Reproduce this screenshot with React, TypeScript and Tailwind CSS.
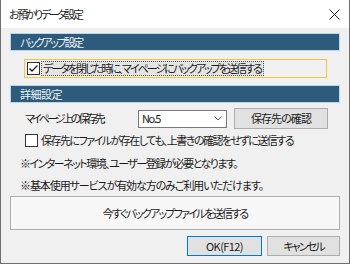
import React from "react";

const font = {
  fontFamily: '"Noto Sans CJK JP", "Noto Sans", sans-serif',
  fontFeatureSettings: '"palt"',
};

function CheckBox({ checked }: { checked?: boolean }) {
  return (
    <svg width="13" height="13" viewBox="0 0 13 13" className="shrink-0">
      <rect x="0.5" y="0.5" width="12" height="12" fill="#ffffff" stroke="#333333" />
      {checked && (
        <path d="M2.5 6.5 L5 9 L10.5 3.5" fill="none" stroke="#222222" strokeWidth="1.4" />
      )}
    </svg>
  );
}

function Header({ label, track }: { label: string; track: string }) {
  return (
    <div className="h-[18px] bg-[#2d5b7b] border border-[#bdd6e9] flex items-center pl-[9px]">
      <span className={"text-[11px] leading-none text-[#eef3f7] whitespace-nowrap " + track}>{label}</span>
    </div>
  );
}

export default function App() {
  return (
    <div
      className="w-[350px] h-[264px] overflow-hidden bg-[#f0f0f0] border-x border-b border-[#6e6e6e] flex flex-col text-[#1a1a1a]"
      style={font}
    >
      <div className="h-[28px] bg-white flex items-center justify-between pl-[8px] pr-[9px] shrink-0">
        <span className="text-[11px] leading-none text-[#222] whitespace-nowrap tracking-[-2.4px]">お預かりデータ設定</span>
        <svg width="11" height="11" viewBox="0 0 11 11">
          <path d="M0.5 0.5 L10.5 10.5 M10.5 0.5 L0.5 10.5" stroke="#222" strokeWidth="1" />
        </svg>
      </div>
      <div className="flex flex-col px-[9px] pt-[5px]">
        <Header label="バックアップ設定" track="tracking-[-2.25px]" />
        <div className="mt-[8px] ml-[14px] w-[303px] h-[19px] border border-[#f5c53c] flex items-center pl-[2px]">
          <CheckBox checked />
          <span className="ml-[1px] h-[15px] flex items-center pl-[1px] pr-[2px] border border-dotted border-[#555] bg-[#e4e4e4] text-[11px] leading-none whitespace-nowrap tracking-[-1.98px]">
            データを閉じた時に、マイページにバックアップを送信する
          </span>
        </div>
        <div className="mt-[7px]">
          <Header label="詳細設定" track="tracking-[-0.5px]" />
        </div>
        <div className="mt-[5px] h-[21px] flex items-center">
          <span className="ml-[15px] w-[113px] text-[11px] leading-none whitespace-nowrap tracking-[-2.9px]">マイページ上の保存先:</span>
          <div className="w-[89px] h-[18px] bg-white border border-[#7a7a7a] flex items-center justify-between pl-[3px] pr-[4px]">
            <span className="text-[11px] leading-none tracking-[-1.4px]">No.5</span>
            <svg width="8" height="5" viewBox="0 0 8 5">
              <path d="M0.5 0.5 L4 4 L7.5 0.5" fill="none" stroke="#555" strokeWidth="1" />
            </svg>
          </div>
          <button className="ml-[7px] w-[94px] h-[21px] bg-[#e1e1e1] border border-[#adadad] text-[11px] leading-none flex items-center justify-center whitespace-nowrap tracking-[-0.93px]">
            保存先の確認
          </button>
        </div>
        <div className="mt-[4px] h-[14px] flex items-center pl-[15px]">
          <CheckBox />
          <span className="ml-[3px] text-[11px] leading-none whitespace-nowrap tracking-[-1.52px]">
            保存先にファイルが存在しても、上書きの確認をせずに送信する
          </span>
        </div>
        <div className="mt-[8px] h-[16px] flex items-center pl-[10px] text-[11px] leading-none whitespace-nowrap tracking-[-1.55px]">
          ※インターネット環境、ユーザー登録が必要となります。
        </div>
        <div className="mt-[6px] h-[16px] flex items-center pl-[10px] text-[11px] leading-none whitespace-nowrap tracking-[-1.08px]">
          ※基本使用サービスが有効な方のみご利用いただけます。
        </div>
        <button className="mt-[3px] h-[34px] w-full bg-[#f7f7f7] border border-[#adadad] text-[11px] leading-none flex items-center justify-center whitespace-nowrap tracking-[-1.8px]">
          今すぐバックアップファイルを送信する
        </button>
        <div className="mt-[6px] flex justify-end gap-[5px]">
          <button className="w-[75px] h-[20px] bg-[#e1e1e1] border border-[#0078d7] text-[11px] leading-none flex items-center justify-center whitespace-nowrap tracking-[-0.57px]">
            OK(F12)
          </button>
          <button className="w-[73px] h-[20px] bg-[#e1e1e1] border border-[#adadad] text-[11px] leading-none flex items-center justify-center whitespace-nowrap tracking-[-1.96px]">
            キャンセル
          </button>
        </div>
      </div>
    </div>
  );
}
